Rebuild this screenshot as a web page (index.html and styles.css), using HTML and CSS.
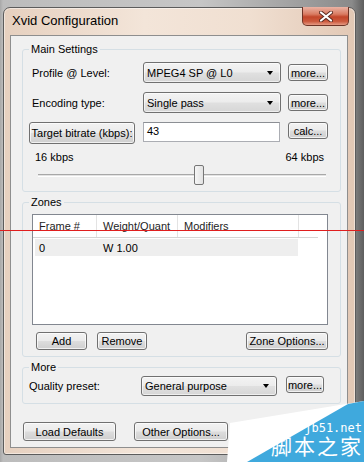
FILE: index.html
```html
<!DOCTYPE html>
<html>
<head>
<meta charset="utf-8">
<link rel="stylesheet" href="styles.css">
</head>
<body>
<div class="window">
  <div class="titlebar">
    <span class="title">Xvid Configuration</span>
    <div class="close">
      <svg width="14" height="11" viewBox="0 0 14 11">
        <path d="M2 1.5 L12 9.5 M12 1.5 L2 9.5" stroke="#5a2a20" stroke-width="4" stroke-linecap="round"/>
        <path d="M2 1.5 L12 9.5 M12 1.5 L2 9.5" stroke="#ffffff" stroke-width="2.2" stroke-linecap="round"/>
      </svg>
    </div>
  </div>
  <div class="client">
    <fieldset class="group main">
      <legend>Main Settings</legend>
      <div class="form-grid">
        <span class="label">Profile @ Level:</span>
        <div class="combo"><span>MPEG4 SP @ L0</span><span class="arrow"></span></div>
        <button class="btn more">more...</button>
        <span class="label">Encoding type:</span>
        <div class="combo"><span>Single pass</span><span class="arrow"></span></div>
        <button class="btn more">more...</button>
        <button class="btn target">Target bitrate (kbps):</button>
        <div class="edit">43</div>
        <button class="btn more calc">calc...</button>
      </div>
      <div class="scale"><span>16 kbps</span><span>64 kbps</span></div>
      <div class="slider">
        <div class="track"></div>
        <div class="thumb"></div>
      </div>
    </fieldset>

    <fieldset class="group zones">
      <legend>Zones</legend>
      <div class="list">
        <div class="lhead">
          <div class="hcell c1">Frame #</div>
          <div class="hcell c2">Weight/Quant</div>
          <div class="hcell c3">Modifiers</div>
          <div class="hcell filler"></div>
        </div>
        <div class="lrow">
          <div class="rcell r1">0</div>
          <div class="rcell r2">W 1.00</div>
        </div>
      </div>
      <div class="zone-buttons">
        <button class="btn add">Add</button>
        <button class="btn remove">Remove</button>
        <button class="btn zoneopt">Zone Options...</button>
      </div>
    </fieldset>

    <fieldset class="group more-group">
      <legend>More</legend>
      <div class="form-grid2">
        <span class="label">Quality preset:</span>
        <div class="combo combo2"><span>General purpose</span><span class="arrow"></span></div>
        <button class="btn more more2">more...</button>
      </div>
    </fieldset>

    <div class="bottom-buttons">
      <button class="btn load">Load Defaults</button>
      <button class="btn other">Other Options...</button>
    </div>
  </div>
</div>

<div class="redline"></div>

<div class="watermark">
  <svg class="wm-shape" width="140" height="66" viewBox="0 0 140 66">
    <polygon points="3,66 6,27 140,5 140,66" fill="#ffffff"/>
    <polygon points="23,66 124,8 140,5 140,66" fill="#3fa9dd"/>
  </svg>
  <span class="wm-url">jb51.net</span>
  <span class="wm-name">脚本之家</span>
</div>
</body>
</html>
```
FILE: styles.css
```css
* { box-sizing: border-box; }
html, body { margin: 0; }
body {
  width: 364px;
  height: 462px;
  overflow: hidden;
  position: relative;
  padding: 7px 0 0 3px;
  background: linear-gradient(90deg, #a8a8a8 0, #bcbcbc 3px, #c6c6c6 200px, #8a8a8a 352px, #5e5e5e 364px);
  font-family: "Liberation Sans", Arial, sans-serif;
  font-size: 11px;
  color: #000;
}
.window {
  width: 353px;
  height: 448px;
  border: 1px solid #5c5c5c;
  border-radius: 7px 7px 3px 3px;
  background: linear-gradient(90deg, #e6d0bf 0%, #f3e5d9 40%, #f0dfd1 70%, #e2c8b5 100%);
  box-shadow: inset 0 0 0 1px rgba(255,255,255,0.45);
  padding: 0 7px 6px 6px;
  display: flex;
  flex-direction: column;
}
.titlebar {
  height: 27px;
  display: flex;
  align-items: flex-start;
}
.title {
  margin: 5px 0 0 2px;
  font-size: 13px;
  line-height: 15px;
  color: #000;
}
.close {
  margin: -1px -1px 0 auto;
  width: 47px;
  height: 19px;
  border: 1px solid #6e3426;
  border-top: none;
  border-radius: 0 0 5px 5px;
  background: linear-gradient(180deg, #eab3a4 0%, #d97b62 40%, #c2462a 55%, #cc5a3e 80%, #e59a83 100%);
  display: flex;
  align-items: center;
  justify-content: center;
}
.client {
  flex: 1;
  border: 1px solid #8e8e8e;
  background: #f0f0f0;
  padding: 7px 6px 0 11px;
  display: flex;
  flex-direction: column;
}
.group {
  margin: 0;
  border: 1px solid #d5dfe5;
  border-radius: 3px;
  padding: 0 12px 6px 9px;
  min-width: 0;
}
.group legend {
  padding: 0 2px;
  margin-left: -3px;
  font-size: 11px;
  line-height: 13px;
}
.main { padding-top: 6px; }
.zones { margin-top: 4px; padding-top: 5px; }
.more-group { margin-top: 4px; padding-top: 2px; padding-bottom: 7px; }

.form-grid {
  display: grid;
  grid-template-columns: 111px 138px 47px;
  column-gap: 0;
  row-gap: 9px;
  grid-auto-rows: 21px;
  align-items: center;
}
.form-grid2 {
  display: grid;
  grid-template-columns: 109px 136px 47px;
  column-gap: 0;
  grid-auto-rows: 20px;
  align-items: center;
}
.label { white-space: nowrap; }
.form-grid2 .label { margin-left: -3px; }

.btn {
  font-family: "Liberation Sans", Arial, sans-serif;
  font-size: 11px;
  color: #000;
  border: 1px solid #707070;
  border-radius: 3px;
  background: linear-gradient(180deg, #f2f2f2 0%, #ebebeb 48%, #dddddd 52%, #cfcfcf 100%);
  box-shadow: inset 0 0 0 1px rgba(255,255,255,0.7);
  padding: 0;
  margin: 0;
  white-space: nowrap;
}
.more { height: 17px; width: 40px; justify-self: end; }
.calc { align-self: start; }
.more2 { width: 38px; align-self: start; }
.target {
  margin-left: -3px;
  width: 106px;
  height: 22px;
  padding-top: 1px;
}
.combo {
  height: 21px;
  width: 138px;
  border: 1px solid #707070;
  border-radius: 3px;
  background: linear-gradient(180deg, #f3f3f3 0%, #ececec 48%, #e0e0e0 52%, #d6d6d6 100%);
  box-shadow: inset 0 0 0 1px rgba(255,255,255,0.6);
  display: flex;
  align-items: center;
  justify-content: space-between;
  padding: 0 7px 0 3px;
  font-size: 11px;
}
.combo2 { height: 20px; width: 136px; }
.arrow {
  width: 0;
  height: 0;
  border-left: 3.5px solid transparent;
  border-right: 3.5px solid transparent;
  border-top: 4px solid #000;
}
.edit {
  height: 20px;
  width: 137px;
  background: #fff;
  border: 1px solid #abadb3;
  border-top-color: #8c8f94;
  padding: 2px 0 0 3px;
  align-self: start;
}
.scale {
  margin-top: 8px;
  display: flex;
  justify-content: space-between;
  padding: 0 4px 0 3px;
  line-height: 13px;
}
.slider {
  position: relative;
  margin-top: 1px;
  height: 20px;
  padding-top: 9px;
}
.track {
  margin: 0 2px 0 6px;
  height: 3px;
  border-top: 1px solid #a8a8a8;
  border-bottom: 1px solid #ffffff;
  background: #e3e3e3;
}
.thumb {
  position: absolute;
  left: 162px;
  top: 0;
  width: 10px;
  height: 20px;
  border: 1px solid #767676;
  border-radius: 2px;
  background: linear-gradient(90deg, #f6f6f6, #e2e2e2);
}

.list {
  width: 296px;
  height: 111px;
  background: #fff;
  border: 1px solid #828790;
}
.lhead {
  display: flex;
  height: 23px;
  border-bottom: 1px solid #d5d5d5;
  margin-right: 9px;
}
.hcell {
  border-right: 1px solid #e3e3e3;
  padding: 5px 0 0 6px;
  color: #1e1e1e;
  white-space: nowrap;
}
.c1 { width: 64px; }
.c2 { width: 81px; }
.c3 { width: 121px; }
.filler { flex: 1; border-right: none; }
.lrow {
  display: flex;
  width: 263px;
  height: 17px;
  margin: 1px 0 0 2px;
  background: #eeeeee;
  align-items: center;
}
.r1 { width: 62px; padding-left: 4px; }
.r2 { padding-left: 6px; }

.zone-buttons {
  display: flex;
  margin-top: 7px;
  padding-left: 4px;
  width: 296px;
}
.zone-buttons .btn { height: 18px; }
.add { width: 51px; }
.remove { width: 50px; margin-left: 10px; }
.zoneopt { width: 82px; margin-left: auto; }

.bottom-buttons {
  display: flex;
  margin-top: 18px;
  padding-left: 1px;
}
.bottom-buttons .btn { height: 19px; }
.load { width: 93px; }
.other { width: 94px; margin-left: 18px; }

.redline {
  position: absolute;
  left: 0;
  top: 230px;
  width: 364px;
  height: 1px;
  background: #e01e1e;
}

.watermark {
  position: absolute;
  right: 0;
  bottom: 0;
  width: 140px;
  height: 66px;
}
.wm-shape { position: absolute; left: 0; top: 0; }
.wm-url {
  position: absolute;
  right: 2px;
  top: 27px;
  font-family: "DejaVu Sans Mono", monospace;
  font-size: 12px;
  line-height: 10px;
  color: #ffffff;
}
.wm-name {
  position: absolute;
  right: 1px;
  top: 39px;
  font-family: "Noto Sans CJK SC", sans-serif;
  font-size: 21px;
  line-height: 21px;
  letter-spacing: 2px;
  color: #ffffff;
}
```
